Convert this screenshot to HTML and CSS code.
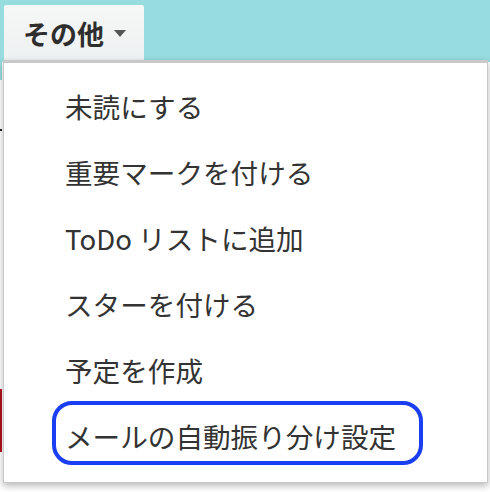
FILE: index.html
```html
<!DOCTYPE html>
<html lang="ja">
<head>
<meta charset="utf-8">
<link rel="stylesheet" href="styles.css">
</head>
<body>
<div class="page">
  <header class="topbar">
    <button class="more">その他<span class="caret"></span></button>
  </header>
  <div class="content">
    <div class="edge edge-teal"></div>
    <div class="edge edge-black"></div>
    <div class="edge edge-red"></div>
  </div>
  <ul class="menu">
    <li class="item">未読にする</li>
    <li class="item">重要マークを付ける</li>
    <li class="item">ToDo リストに追加</li>
    <li class="item">スターを付ける</li>
    <li class="item">予定を作成</li>
    <li class="item item-marked">メールの自動振り分け設定<span class="mark"></span></li>
  </ul>
</div>
</body>
</html>
```
FILE: styles.css
```css
html, body {
  margin: 0;
  padding: 0;
  background: #ffffff;
}
body {
  font-family: "Noto Sans CJK JP", "Noto Sans", sans-serif;
  color: #333333;
}
.page {
  position: relative;
  width: 490px;
  height: 492px;
  overflow: hidden;
}
.topbar {
  height: 62px;
  background: #97dcdf;
  padding: 5px 0 0 4px;
  box-sizing: border-box;
}
.more {
  display: flex;
  align-items: center;
  width: 140px;
  height: 56px;
  margin: 0;
  padding: 0 0 0 19px;
  border: none;
  border-radius: 2px;
  background: linear-gradient(#f6f7f7, #eef1f1);
  font-family: "Noto Sans CJK JP", "Noto Sans", sans-serif;
  font-weight: 700;
  font-size: 27px;
  color: #2e2e2e;
  box-sizing: border-box;
}
.caret {
  width: 0;
  height: 0;
  margin-left: 10px;
  border-left: 6px solid transparent;
  border-right: 6px solid transparent;
  border-top: 7px solid #555555;
}
.content {
  display: flex;
  flex-direction: column;
}
.edge {
  width: 2px;
}
.edge-teal {
  height: 18px;
  background: #97dcdf;
}
.edge-black {
  height: 2px;
  margin-top: 49px;
  background: #222222;
}
.edge-red {
  height: 63px;
  margin-top: 258px;
  background: #b3121c;
}
.menu {
  position: absolute;
  top: 60px;
  left: 3px;
  width: 485px;
  height: 423px;
  margin: 0;
  padding: 10px 0 0 0;
  list-style: none;
  background: #ffffff;
  border: 1px solid #c9c9c9;
  border-top: 3px solid #c9c9c9;
  box-sizing: border-box;
  box-shadow: 0 3px 7px rgba(0, 0, 0, 0.28);
}
.item {
  position: relative;
  height: 66px;
  line-height: 66px;
  padding-left: 61px;
  font-size: 27.6px;
  color: #333333;
  white-space: nowrap;
}
.mark {
  position: absolute;
  left: 48px;
  top: -2px;
  width: 371px;
  height: 64px;
  border: 4px solid #1a3ef2;
  border-radius: 20px;
  box-sizing: border-box;
}
```
